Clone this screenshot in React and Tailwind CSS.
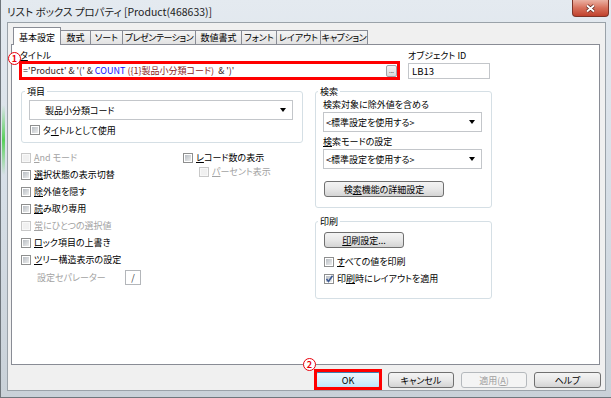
import React from 'react'

// small Win7-style widgets

const Check = ({ checked, disabled }) => (
  <span
    className={`flex h-[10px] w-[10px] shrink-0 items-center justify-center border ${
      disabled ? 'border-[#c8c8c8] bg-[#f8f8f8]' : 'border-[#8e8f8f] bg-white'
    }`}
  >
    <span
      className={`flex h-[6px] w-[6px] items-center justify-center ${
        disabled ? 'bg-[#f0f0f0]' : 'bg-linear-to-br from-[#b9bec4] to-[#eceded]'
      }`}
    >
      {checked && (
        <svg width="9" height="8" viewBox="0 0 9 8" className="overflow-visible">
          <path d="M1.5 4 L3.5 6.5 L7.5 0.8" fill="none" stroke="#3e5a93" strokeWidth="1.6" />
        </svg>
      )}
    </span>
  </span>
)

const CheckRow = ({ children, checked, disabled, className = '' }) => (
  <div className={`flex h-[17px] items-center gap-[3px] ${className}`}>
    <Check checked={checked} disabled={disabled} />
    <span className={`whitespace-nowrap leading-[11px] ${disabled ? 'text-[#a3a3a3]' : 'text-black'}`}>{children}</span>
  </div>
)

const Combo = ({ text, className = '' }) => (
  <div className={`flex h-[20px] items-center justify-between border border-[#c3c6ca] bg-white pr-[6px] ${className}`}>
    <span className="leading-[11px]">{text}</span>
    <svg width="6" height="4" viewBox="0 0 6 4">
      <polygon points="0,0 6,0 3,4" fill="#000" />
    </svg>
  </div>
)

const Btn = ({ children, className = '', disabled, primary }) => (
  <div
    className={`flex h-[16px] items-center justify-center rounded-[3px] border leading-[11px] ${
      disabled
        ? 'border-[#b5b9bd] bg-[#f4f4f4] text-[#a0a0a0]'
        : primary
        ? 'border-[#3c7fb1] bg-linear-to-b from-[#eaf6fd] via-[#d9f0fc] to-[#bee6fd] text-black'
        : 'border-[#707070] bg-linear-to-b from-[#f4f4f4] via-[#e8e8e8] to-[#d4d4d4] text-black'
    } ${className}`}
  >
    {children}
  </div>
)

const Circled = ({ n, className = '' }) => (
  <span
    className={`absolute flex h-[13px] w-[13px] items-center justify-center rounded-full border-[1.5px] border-[#e8000b] bg-white text-[9px] font-bold leading-none text-[#e8000b] ${className}`}
  >
    {n}
  </span>
)

const tabs = [
  ['数式', 'w-[31px]'],
  ['ソート', 'w-[33px]'],
  ['プレゼンテーション', 'w-[74px] tracking-[-0.5px]'],
  ['数値書式', 'w-[47px]'],
  ['フォント', 'w-[36px]'],
  ['レイアウト', 'w-[45px]'],
  ['キャプション', 'w-[48px] tracking-[-0.4px]'],
]

export default function App() {
  return (
    <div className="relative flex h-[398px] w-[611px] flex-col overflow-hidden border-b border-l border-[#6f767c] bg-linear-to-b from-[#e4eaf0] via-[#d6dee6] to-[#c9d1d8] font-['Noto_Sans_CJK_JP','Liberation_Sans',sans-serif] text-[9px] text-black [font-feature-settings:'palt']">
      {/* glass reflection on the frame */}
      <div className="absolute left-[1px] top-[105px] h-[70px] w-[3px] bg-linear-to-b from-transparent via-[#58d05a] to-transparent" />

      {/* title bar */}
      <div className="flex h-[22px] shrink-0 items-start justify-between">
        <span className="mt-[5px] pl-[6px] text-[10.5px] leading-[13px] text-[#1c1c1c]">
          リスト ボックス プロパティ [Product(468633)]
        </span>
        <div className="mr-[2px] flex h-[17px] w-[37px] items-center justify-center rounded-b-[4px] border border-t-0 border-[#7d3428] bg-linear-to-b from-[#eab1a3] via-[#d7705b] to-[#c0412d]">
          <svg width="11" height="9" viewBox="0 0 11 9">
            <path d="M2 1.5 L9 7.5 M9 1.5 L2 7.5" stroke="#5b2219" strokeWidth="3.4" />
            <path d="M2 1.5 L9 7.5 M9 1.5 L2 7.5" stroke="#fff" strokeWidth="1.9" />
          </svg>
        </div>
      </div>

      {/* client area */}
      <div className="mb-[6px] ml-[6px] mr-[5px] flex flex-1 flex-col border border-[#9aa2a9] bg-[#f0f0f0]">
        {/* tabs */}
        <div className="mt-[4px] flex h-[17px] items-end pl-[5px]">
          <div className="relative z-10 -mb-px flex h-[18px] w-[48px] items-center justify-center whitespace-nowrap border border-b-0 border-[#898c95] bg-white pt-[1px] leading-[11px]">
            基本設定
          </div>
          {tabs.map(([t, w]) => (
            <div
              key={t}
              className={`-ml-px flex h-[14px] items-center justify-center whitespace-nowrap border border-b-0 border-[#898c95] bg-linear-to-b from-[#f5f5f5] to-[#e2e2e2] leading-[11px] ${w}`}
            >
              {t}
            </div>
          ))}
        </div>

        {/* tab page */}
        <div className="ml-[3px] h-[321px] w-[589px] border border-[#898c95] bg-white px-[7px] pt-[5px]">
          {/* title + object id */}
          <div className="flex gap-[8px]">
            <div className="flex w-[381px] flex-col">
              <span className="h-[11px] pl-[1px] leading-[11px]">
                <u>タ</u>イトル
              </span>
              <div className="flex h-[19px] items-center border-[3px] border-[#ff0000] bg-white pl-[1px]">
                <span className="whitespace-pre leading-[11px]">
                  <span className="text-[#3a1f1f]">='Product' &amp; '(' &amp; </span>
                  <span className="text-[#1010ff]">COUNT</span>
                  <span className="text-[#8b1c1c]"> ({'{'}1{'}'}製品小分類コード)</span>
                  <span className="text-[#3a1f1f]">  &amp; ')'</span>
                </span>
                <div className="ml-auto flex h-[12px] w-[11px] items-end justify-center rounded-[2px] border border-[#9fa3a8] bg-linear-to-b from-[#f6f6f6] to-[#d9d9d9] pb-[2px] text-[6px] leading-[6px]">
                  ...
                </div>
              </div>
            </div>
            <div className="flex w-[82px] flex-col">
              <span className="h-[11px] leading-[11px]">オブジェクト ID</span>
              <div className="mt-[2px] flex h-[16px] items-center border border-[#c3c6ca] pl-[3px] text-[9.5px] leading-[11px]">
                LB13
              </div>
            </div>
          </div>

          {/* lower part */}
          <div className="ml-[2px] mt-[6px] flex gap-[12px]">
            {/* left column */}
            <div className="flex w-[282px] flex-col">
              <fieldset className="rounded-[3px] border border-[#d5dfe5] px-[3px] pb-[7px]">
                <legend className="px-[2px] leading-[11px]">項目</legend>
                <Combo text="製品小分類コード" className="ml-[4px] mt-[3px] w-[264px] pl-[15px]" />
                <div className="ml-[5px] mt-[5px] flex h-[10px] items-center gap-[3px]">
                  <Check />
                  <span className="leading-[11px]">
                    タ<u>イ</u>トルとして使用
                  </span>
                </div>
              </fieldset>

              <div className="mt-[6px] flex">
                <div className="flex w-[162px] flex-col">
                  <CheckRow disabled>
                    <u>A</u>nd モード
                  </CheckRow>
                  <CheckRow>
                    <u>選</u>択状態の表示切替
                  </CheckRow>
                  <CheckRow>
                    <u>除</u>外値を隠す
                  </CheckRow>
                  <CheckRow>
                    <u>読</u>み取り専用
                  </CheckRow>
                  <CheckRow disabled>
                    <u>常</u>にひとつの選択値
                  </CheckRow>
                  <CheckRow>
                    <u>ロ</u>ック項目の上書き
                  </CheckRow>
                  <CheckRow>
                    <u>ツ</u>リー構造表示の設定
                  </CheckRow>
                  <div className="flex h-[18px] items-center pl-[16px]">
                    <span className="w-[88px] leading-[11px] text-[#a3a3a3]">設定セパレーター</span>
                    <div className="flex h-[15px] w-[16px] items-center justify-center border border-[#b3b6ba] bg-white text-[9px] leading-none text-[#333]">
                      /
                    </div>
                  </div>
                </div>
                <div className="flex flex-col">
                  <CheckRow>
                    <u>レ</u>コード数の表示
                  </CheckRow>
                  <CheckRow disabled className="-mt-[3px] pl-[16px]">
                    <u>パ</u>ーセント表示
                  </CheckRow>
                </div>
              </div>
            </div>

            {/* right column */}
            <div className="flex w-[177px] flex-col">
              <fieldset className="rounded-[3px] border border-[#d5dfe5] pl-[2px] pb-[10px]">
                <legend className="px-[2px] leading-[11px]">検索</legend>
                <div className="ml-[5px] mt-[2px] h-[11px] leading-[11px]">検索対象に除外値を含める</div>
                <Combo text="<標準設定を使用する>" className="ml-[5px] mt-[2px] w-[159px] pl-[2px]" />
                <div className="ml-[5px] mt-[4px] h-[11px] leading-[11px]">
                  <u>検</u>索モードの設定
                </div>
                <Combo text="<標準設定を使用する>" className="ml-[5px] mt-[2px] w-[159px] pl-[2px]" />
                <Btn className="ml-[6px] mt-[12px] w-[120px]">
                  検<u>索</u>機能の詳細設定
                </Btn>
              </fieldset>

              <fieldset className="mt-[8px] rounded-[3px] border border-[#d5dfe5] pl-[2px] pb-[11px]">
                <legend className="px-[2px] leading-[11px]">印刷</legend>
                <Btn className="ml-[6px] mt-[5px] w-[80px]">
                  <u>印</u>刷設定...
                </Btn>
                <CheckRow className="ml-[6px] mt-[5px]">
                  <u>す</u>べての値を印刷
                </CheckRow>
                <CheckRow checked className="ml-[6px]">
                  印<u>刷</u>時にレイアウトを適用
                </CheckRow>
              </fieldset>
            </div>
          </div>
        </div>

        {/* dialog buttons */}
        <div className="mt-[7px] flex justify-end gap-[7px] pr-[4px]">
          <div className="relative">
            <Btn primary className="w-[66px]">
              OK
            </Btn>
            <div className="absolute -bottom-[2px] -left-[1px] -right-[1px] -top-[3px] border-[3px] border-[#ff0000]" />
          </div>
          <Btn className="w-[66px]">キャンセル</Btn>
          <Btn disabled className="w-[66px]">
            適用(<u>A</u>)
          </Btn>
          <Btn className="w-[67px]">ヘルプ</Btn>
        </div>
      </div>

      {/* annotations */}
      <Circled n="1" className="left-[7px] top-[52px]" />
      <Circled n="2" className="left-[302px] top-[358px]" />
    </div>
  )
}
